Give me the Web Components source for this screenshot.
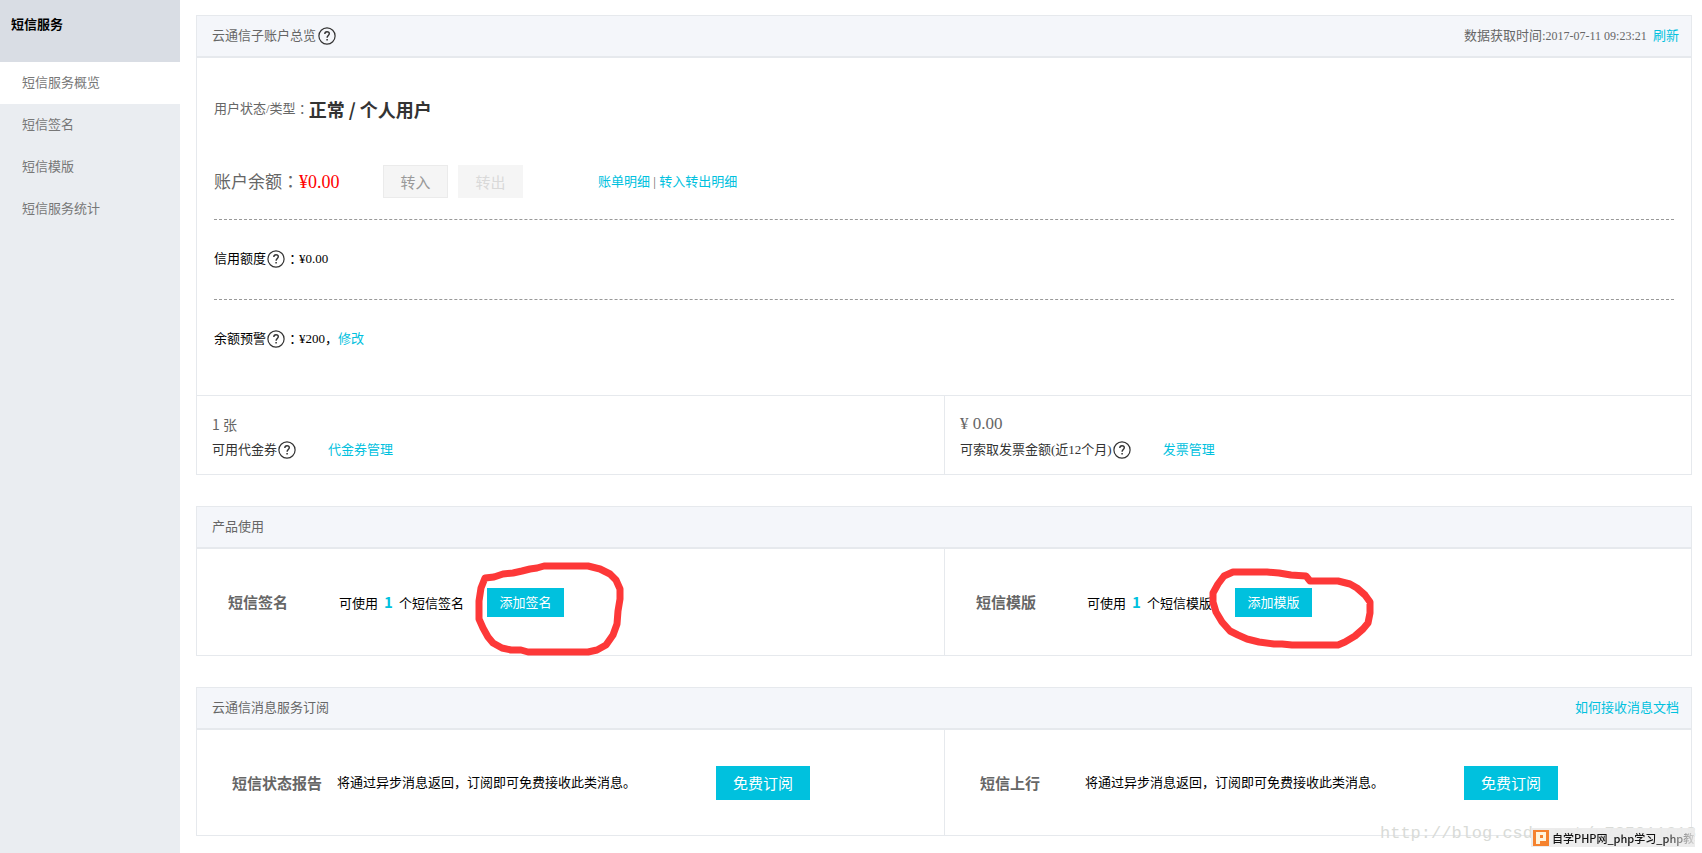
<!DOCTYPE html>
<html lang="zh-CN">
<head>
<meta charset="utf-8">
<title>短信服务概览</title>
<style>
  body {
    margin: 0;
    background: #fff;
    color: #000;
    font: 13px/20px "Liberation Serif", "Noto Sans CJK SC", sans-serif;
    --line: #e6e9ed;
    --accent: #00c1de;
    --muted: #666;
    --sans: "Noto Sans CJK SC", sans-serif;
  }
</style>
</head>
<body>
<sms-app></sms-app>

<script>
const define = (name, html, setup) => {
  const template = document.createElement('template');
  template.innerHTML = html;
  customElements.define(name, class extends HTMLElement {
    constructor() {
      super();
      this.attachShadow({ mode: 'open' }).append(template.content.cloneNode(true));
    }
    connectedCallback() { if (setup) setup(this, this.shadowRoot); }
  });
};

/* Round question-mark hint */
define('help-icon', `
  <style>
    :host { display: inline-flex; flex: none; }
    svg { display: block; width: 18px; height: 18px; }
  </style>
  <svg viewBox="0 0 18 18" fill="none" stroke="#333" stroke-width="1.2" role="img" aria-label="帮助">
    <circle cx="9" cy="9" r="8.1"/>
    <path d="M6.8 7.1C6.8 5.6 7.7 4.8 9 4.8s2.3.8 2.3 2c0 1.7-2.2 1.9-2.2 4" stroke-width="1.4"/>
    <path d="M9.1 12v1.6" stroke-width="1.5"/>
  </svg>`);

define('text-link', `
  <style>
    :host { display: inline-block; }
    a { color: var(--accent); text-decoration: none; }
  </style>
  <a href="#"><slot></slot></a>`);

/* Solid button; size="large" for the subscription buttons */
define('action-button', `
  <style>
    :host { display: inline-block; }
    button {
      display: block; margin: 0; border: 0; padding: 0 12px; height: 29px; min-width: 77px;
      background: var(--accent); color: #fff; font: 13px/28px var(--sans); white-space: nowrap;
    }
    :host([size="large"]) button { height: 34px; min-width: 94px; font-size: 15px; line-height: 32px; }
    :host([kind="plain"]) button {
      height: 33px; min-width: 65px; border: 1px solid #ebebeb; background: #f5f5f5;
      color: #999; font-size: 15px; line-height: 28px;
    }
    :host([kind="plain"][disabled]) button { border-color: #f5f5f5; color: #d9d9d9; }
  </style>
  <button type="button"><slot></slot></button>`,
  (host, root) => { root.querySelector('button').disabled = host.hasAttribute('disabled'); });

/* Freehand red loop drawn over the slotted button */
define('marker-loop', `
  <style>
    :host { display: block; position: relative; width: max-content; }
    svg { position: absolute; overflow: visible; pointer-events: none; fill: none;
          stroke: #fd3838; stroke-width: 7; stroke-linecap: round; stroke-linejoin: round; }
    .a { left: -12px; top: -26px; width: 152px; height: 95px; }
    .b { left: -28px; top: -22px; width: 170px; height: 85px; }
    :host([shape="a"]) .b, :host([shape="b"]) .a { display: none; }
  </style>
  <slot></slot>
  <svg class="a" viewBox="475 563 152 95" aria-hidden="true">
    <path d="M485 579L494 578L503 575L513 574L522 572L530 570L537 569L544 567H588L600 570L610 575L616 581L620 590V600L618 612L617 625L613 636L606 646L597 651L588 653H528L521 651H511L502 649L493 644L488 638L483 629L479 620V602L481 589Z"/>
  </svg>
  <svg class="b" viewBox="1206 567 170 85" aria-hidden="true">
    <path d="M1305 577L1290 576L1278 574L1266 573H1232L1223 577L1217 585L1212 594V603L1215 613L1221 623L1229 632L1237 636L1246 640L1258 643L1273 645L1281 645L1291 646H1337L1344 643L1354 637L1362 630L1367 624L1369 614V603L1364 596L1356 589L1349 585L1337 582H1309Z"/>
  </svg>`);

define('side-menu', `
  <style>
    :host { display: block; background: #eaedf1; color: var(--muted); }
    h1 { margin: 0; height: 47px; padding: 15px 11px 0; background: #d9dde4; color: #000;
         font: bold 13px/18px var(--sans); }
    ul { margin: 0; padding: 0; list-style: none; }
    a { display: block; height: 42px; padding: 0 22px; color: #777; font: 13px/39px var(--sans); text-decoration: none; }
    a[aria-current] { background: #fff; }
  </style>
  <h1>短信服务</h1>
  <nav><ul>
    <li><a href="#" aria-current="page">短信服务概览</a></li>
    <li><a href="#">短信签名</a></li>
    <li><a href="#">短信模版</a></li>
    <li><a href="#">短信服务统计</a></li>
  </ul></nav>`);

define('info-panel', `
  <style>
    :host { display: block; border: 1px solid var(--line); }
    header { display: flex; align-items: center; justify-content: space-between; height: 40px;
             padding: 0 11px 0 15px; border-bottom: 2px solid var(--line); background: #f4f6fa; color: var(--muted); }
    h2 { display: flex; align-items: center; gap: 2px; margin: 0; font: inherit; line-height: 22px; }
  </style>
  <header><h2><slot name="title"></slot></h2><slot name="extra"></slot></header>
  <slot></slot>`);

/* Two equal cells with a divider */
define('split-row', `
  <style>
    :host { display: grid; grid-template-columns: 1fr 1fr; }
    ::slotted(:last-child) { border-left: 1px solid var(--line); }
  </style>
  <slot></slot>`);

define('account-status', `
  <style>
    :host { display: block; padding: 36px 17px 16px; }
    .row { display: flex; align-items: center; white-space: nowrap; }
    .status { height: 30px; color: var(--muted); }
    .status strong { color: #333; font: bold 18px/28px var(--sans); }
    .balance { margin-top: 41px; padding-bottom: 21px; color: var(--muted); }
    .label { width: 169px; font-size: 17px; line-height: 30px; }
    .label em { color: #f00; font-size: 18px; font-style: normal; }
    .colon { font-family: "Noto Sans CJK TC", sans-serif; }
    .buttons { display: flex; gap: 10px; width: 215px; }
    .item { height: 78px; border-top: 1px dashed #999; padding-bottom: 1px; }
    .item help-icon { margin: 0 1px; }
  </style>
  <div class="row status">用户状态/类型<span class="colon" lang="zh-TW">：</span><strong>正常 / 个人用户</strong></div>
  <div class="row balance">
    <span class="label">账户余额<span class="colon" lang="zh-TW">：</span><em>¥0.00</em></span>
    <span class="buttons">
      <action-button kind="plain">转入</action-button>
      <action-button kind="plain" disabled>转出</action-button>
    </span>
    <span><text-link>账单明细</text-link> | <text-link>转入转出明细</text-link></span>
  </div>
  <div class="row item">信用额度<help-icon></help-icon><span class="colon" lang="zh-TW">：</span>¥0.00</div>
  <div class="row item">余额预警<help-icon></help-icon><span class="colon" lang="zh-TW">：</span>¥200，<text-link>修改</text-link></div>`);

define('asset-cell', `
  <style>
    :host { display: block; height: 62px; padding: 16px 15px 0; border-top: 1px solid var(--line); white-space: nowrap; }
    .value { display: flex; align-items: center; height: 24px; color: var(--muted); }
    .row { display: flex; align-items: center; height: 28px; color: #333; }
    help-icon { margin: 0 32px 0 1px; }
  </style>
  <div class="value"><slot name="value"></slot></div>
  <div class="row"><slot></slot><help-icon></help-icon><slot name="link"></slot></div>`);

define('usage-cell', `
  <style>
    :host { display: grid; grid-template-columns: 111px 148px auto 1fr; align-items: center;
            height: 106px; padding-left: 31px; font-family: var(--sans); white-space: nowrap; }
    h3 { margin: 0; color: var(--muted); font: bold 15px/24px var(--sans); }
    strong { margin: 0 6px; color: var(--accent); font-size: 15px; }
  </style>
  <h3><slot name="name"></slot></h3>
  <span>可使用<strong>1</strong>个<slot name="name2"></slot></span>
  <slot></slot>`);

define('subscribe-cell', `
  <style>
    :host { display: grid; grid-template-columns: 105px 379px auto 1fr; align-items: center;
            height: 105px; padding-left: 35px; white-space: nowrap; }
    h3 { margin: 0; color: var(--muted); font: bold 15px/24px var(--sans); }
  </style>
  <h3><slot></slot></h3>
  <span>将通过异步消息返回，订阅即可免费接收此类消息。</span>
  <action-button size="large">免费订阅</action-button>`);

/* Site watermark with its badge, floating over the page corner */
define('site-watermark', `
  <style>
    :host { position: absolute; right: 7px; bottom: 6px; width: 315px; height: 26px; pointer-events: none; }
    .url { display: block; color: #d9dbd7; font: 17px/26px "Liberation Mono", monospace; white-space: nowrap; }
    .badge { position: absolute; right: 0; bottom: 0; display: flex; align-items: center; gap: 3px;
             box-sizing: border-box; width: 164px; height: 19px; padding-left: 2px; overflow: hidden;
             background: rgba(235, 235, 235, .93); }
    svg { flex: none; width: 16px; height: 16px; }
    .badge span { color: #111; font: 500 11px/18px var(--sans); white-space: nowrap;
                  -webkit-mask-image: linear-gradient(90deg, #000 110px, transparent 146px);
                  mask-image: linear-gradient(90deg, #000 110px, transparent 146px); }
  </style>
  <span class="url">http://blog.csdn.net/u725911618</span>
  <div class="badge">
    <svg viewBox="0 0 16 16" aria-hidden="true">
      <path d="M0 0h16v16H0z" fill="#f5822e"/>
      <path d="M3 2h10v9H7v3H3z" fill="#fff4dc"/>
      <path d="M7 5h3v3H7z" fill="#f5822e"/>
    </svg>
    <span>自学PHP网_php学习_php教程</span>
  </div>`);

define('sms-app', `
  <style>
    :host { display: grid; grid-template-columns: 180px 1fr; position: relative; min-height: 100vh; }
    main { display: flex; flex-direction: column; gap: 31px; min-width: 0; padding: 15px 10px 15px 16px; }
    .time { margin-right: 1px; line-height: 22px; white-space: nowrap; }
    .time small { margin-right: 3px; font-size: 12px; }
    .doc { margin-right: 1px; }
    .num { font-size: 17px; line-height: 24px; }
    .count { font: 14px/22px var(--sans); }
    side-menu { min-height: 100%; }
  </style>
  <side-menu></side-menu>
  <main>
    <info-panel>
      <span slot="title">云通信子账户总览</span><help-icon slot="title"></help-icon>
      <span slot="extra" class="time">数据获取时间:<small>2017-07-11 09:23:21</small> <text-link>刷新</text-link></span>
      <account-status></account-status>
      <split-row>
        <asset-cell><span slot="value" class="count">1 张</span>可用代金券<text-link slot="link">代金券管理</text-link></asset-cell>
        <asset-cell><span slot="value" class="num">¥ 0.00</span>可索取发票金额(近12个月)<text-link slot="link">发票管理</text-link></asset-cell>
      </split-row>
    </info-panel>
    <info-panel>
      <span slot="title">产品使用</span>
      <split-row>
        <usage-cell>
          <span slot="name">短信签名</span><span slot="name2">短信签名</span>
          <marker-loop shape="a"><action-button>添加签名</action-button></marker-loop>
        </usage-cell>
        <usage-cell>
          <span slot="name">短信模版</span><span slot="name2">短信模版</span>
          <marker-loop shape="b"><action-button>添加模版</action-button></marker-loop>
        </usage-cell>
      </split-row>
    </info-panel>
    <info-panel>
      <span slot="title">云通信消息服务订阅</span>
      <text-link slot="extra" class="doc">如何接收消息文档</text-link>
      <split-row>
        <subscribe-cell>短信状态报告</subscribe-cell>
        <subscribe-cell>短信上行</subscribe-cell>
      </split-row>
    </info-panel>
  </main>
  <site-watermark></site-watermark>`);
</script>
</body>
</html>
